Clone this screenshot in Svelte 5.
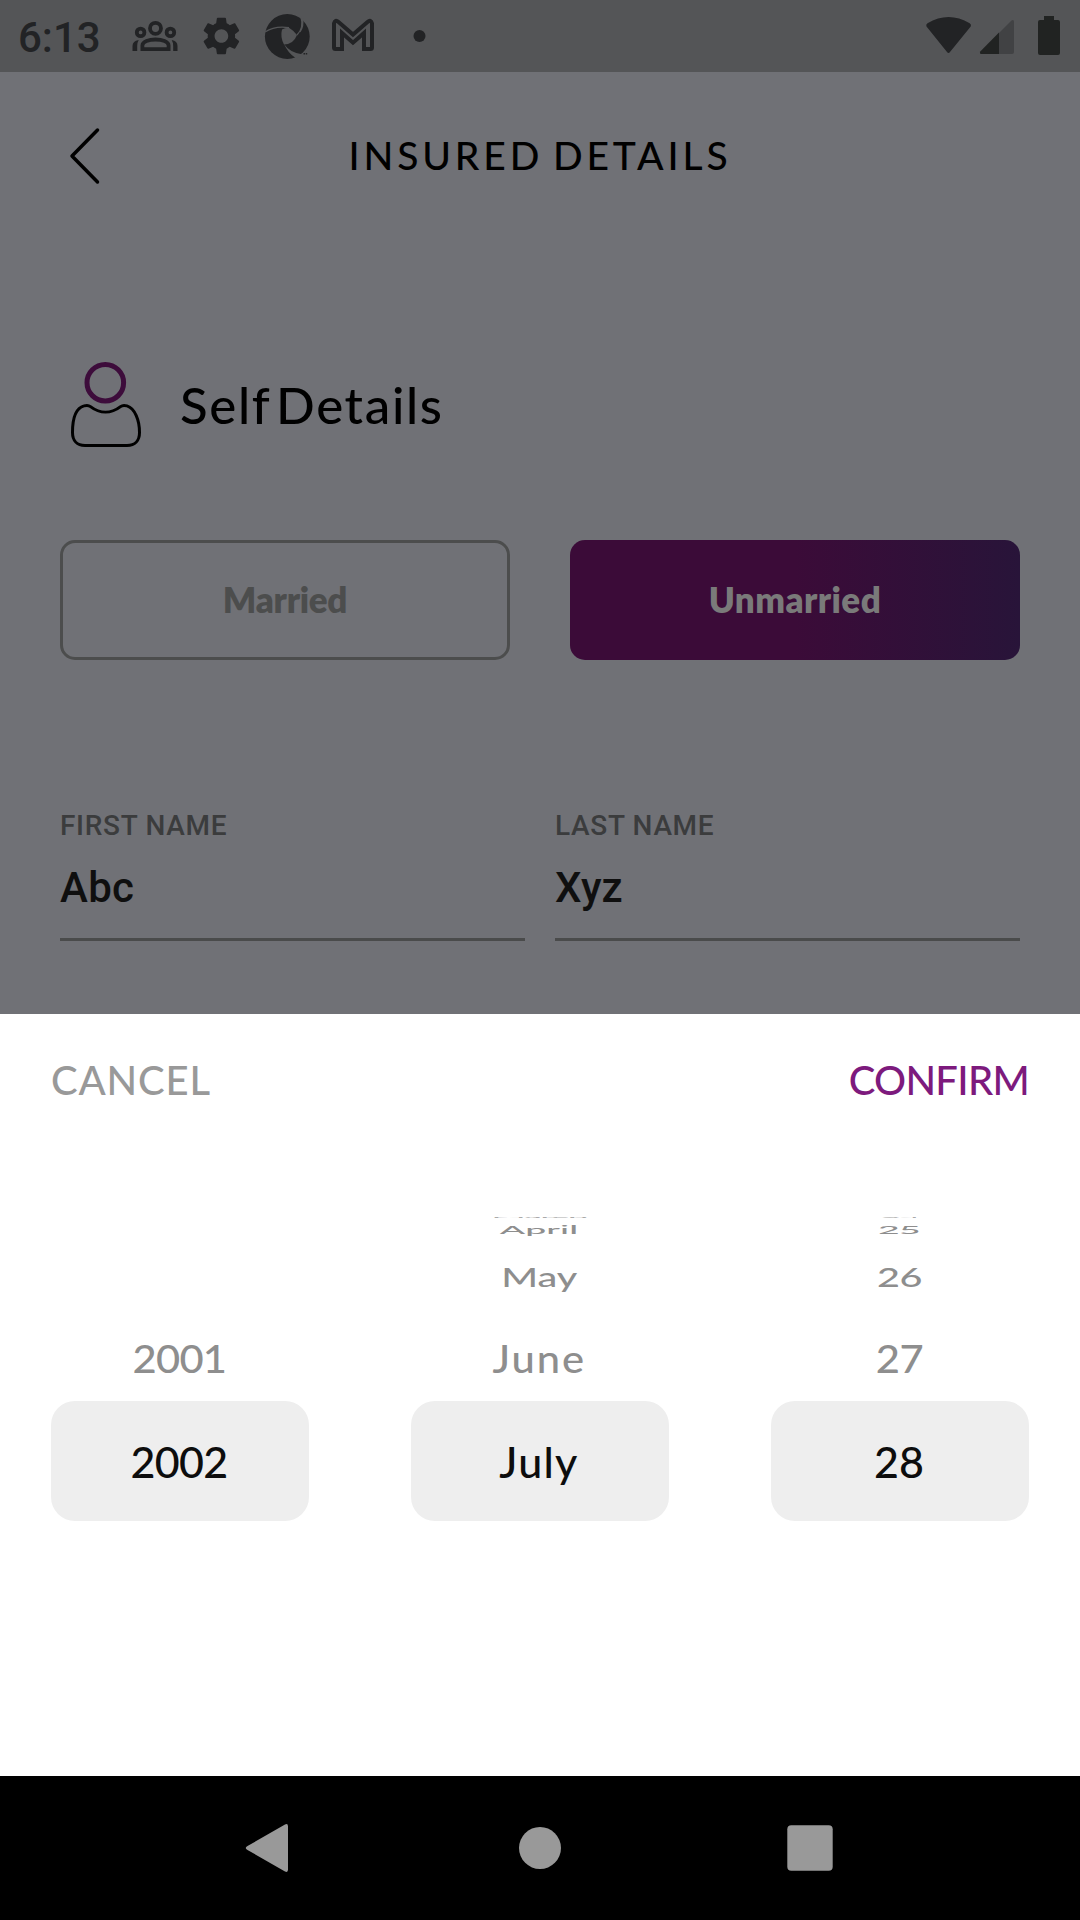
<script>
  const columns = [
    ['', '', '', '2001', '2002'],
    ['March', 'April', 'May', 'June', 'July'],
    ['24', '25', '26', '27', '28']
  ];
  const rowNames = ['r0', 'r1', 'r2', 'r3', 'selected'];
  const wheelWidths = {
    '2001': 97, '2002': 97, March: 113, April: 90, May: 83, June: 97, July: 79,
    '24': 47, '25': 48, '26': 49, '27': 49, '28': 50
  };

  // Tracks a label so that its advance width equals the given number of pixels.
  function fit(node, width) {
    if (!width) return;
    node.style.letterSpacing = '0px';
    const spacing = (width - node.offsetWidth) / node.textContent.length;
    node.style.letterSpacing = `${spacing}px`;
  }
</script>

<div class="screen">
  <header class="status">
    <span class="clock" use:fit={83}>6:13</span>
    <div class="notifications">
      <svg viewBox="-33 -36 66 72">
        <g fill="none" stroke="#222325" stroke-width="3.8">
          <circle cx="0.5" cy="-7.7" r="5.5" />
          <circle cx="-14.4" cy="-3.6" r="3.8" />
          <circle cx="15.4" cy="-3.6" r="3.8" />
          <path d="M-12.6 13.2V9.5C-12.6 1.5 13.6 1.5 13.6 9.5V13.2Z" />
        </g>
        <path fill="#222325" d="M-22.5 15V10q0-5 6.2-6-1.5 2.5-1.5 6V15ZM22.5 15V10q0-5-5.8-6 1.5 2.5 1.5 6V15Z" />
      </svg>
      <svg viewBox="-33 -36 66 72">
        <path fill="#222325" transform="translate(0.4 0) scale(1.9) translate(-12 -12)" d="M19.14 12.94c.04-.3.06-.61.06-.94 0-.32-.02-.64-.07-.94l2.03-1.58c.18-.14.23-.41.12-.61l-1.92-3.32c-.12-.22-.37-.29-.59-.22l-2.39.96c-.5-.38-1.03-.7-1.62-.94l-.36-2.54c-.04-.24-.24-.41-.48-.41h-3.84c-.24 0-.43.17-.47.41l-.36 2.54c-.59.24-1.13.57-1.62.94l-2.39-.96c-.22-.08-.47 0-.59.22L2.74 8.87c-.12.21-.08.47.12.61l2.03 1.58c-.05.3-.09.63-.09.94s.02.64.07.94l-2.03 1.58c-.18.14-.23.41-.12.61l1.92 3.32c.12.22.37.29.59.22l2.39-.96c.5.38 1.03.7 1.62.94l.36 2.54c.05.24.24.41.48.41h3.84c.24 0 .44-.17.47-.41l.36-2.54c.59-.24 1.13-.56 1.62-.94l2.39.96c.22.08.47 0 .59-.22l1.92-3.32c.12-.22.07-.47-.12-.61l-2.01-1.58zM12 15.6c-1.98 0-3.6-1.62-3.6-3.6s1.62-3.6 3.6-3.6 3.6 1.62 3.6 3.6-1.62 3.6-3.6 3.6z" />
      </svg>
      <svg viewBox="-33 -36 66 72">
        <circle cx="0.3" cy="0.5" r="22.4" fill="#222325" />
        <g fill="#545557">
          <path d="M-5-6.5Q-2-8.5 2-8.3 6-6 10-1 8 4 5 6 1 8.5-3 8.500-7 1-5-6.5Z" />
          <path d="M-3 8Q1 17 8 21.5L9 23 16 18.5Q3 17-3 8Z" />
        </g>
        <g fill="none" stroke="#545557" stroke-width="1.2">
          <path d="M-22-4Q-12-10.5 2-8.3M14-19Q17-8 10-1M15.5-17.5Q17-10 13-4" />
        </g>
        <path d="M16.5 17.8h4" stroke="#222325" stroke-width="1.5" stroke-dasharray="1.5 0.7" />
      </svg>
      <svg viewBox="-33 -36 66 72">
        <path fill="none" stroke="#222325" stroke-width="4" d="M-11 13V-3L0 6.7 11-3V13H17.5Q19 13 19 11.5V-12.5Q18-17 14.5-14L0-1.5-14.5-14Q-18-17-19-12.5V11.5Q-19 13-17.5 13Z" />
      </svg>
      <svg viewBox="-33 -36 66 72"><circle cx="0.5" cy="0" r="6" fill="#222325" /></svg>
    </div>
    <svg class="system" viewBox="910 0 170 72">
      <path fill="#222325" d="M926.5 26.5Q925.5 24.5 927.5 23.2 948.5 11 969.7 23.2 971.7 24.5 970.7 26.5L950 52Q948.5 54 947 52Z" />
      <path fill="#414244" d="M999 33 1011.5 20.5Q1014 18.8 1014 22V52Q1014 54 1012 54H999Z" />
      <path fill="#212322" d="M999 32.5V54H982Q978.8 54 980.5 51.2Z" />
      <path fill="#212322" d="M1044 16H1054V20H1058Q1060 20 1060 22V53Q1060 55 1058 55H1040Q1038 55 1038 53V22Q1038 20 1040 20H1044Z" />
    </svg>
  </header>

  <nav class="titlebar">
    <svg class="back" viewBox="0 0 34 60"><path d="M29.5 4 4 30 29.5 56" /></svg>
    <h1><span use:fit={383}>INSURED DETAILS</span></h1>
  </nav>

  <main>
    <section class="person">
      <svg viewBox="0 0 76 92">
        <circle cx="37.3" cy="22.7" r="18.3" />
        <path d="M22.5 46.6Q20 44.6 16 45.9C7 48.4 4.500 60.4 4.5 72.4C4.5 80.4 9 85.4 17 85.4H59C67 85.4 71.5 80.4 71.5 72.4C71.5 60.4 67 48.4 59 45.9Q55 44.6 52.5 46.6C43 53.900 32 53.9 22.5 46.6Z" />
      </svg>
      <h2><span use:fit={264}>Self Details</span></h2>
    </section>

    <div class="choices">
      <button class="outline"><span use:fit={124}>Married</span></button>
      <button class="filled"><span use:fit={172}>Unmarried</span></button>
    </div>

    <div class="fields">
      <label><small use:fit={167}>FIRST NAME</small><b use:fit={74}>Abc</b></label>
      <label><small use:fit={159}>LAST NAME</small><b use:fit={68}>Xyz</b></label>
    </div>
  </main>

  <section class="sheet">
    <div class="actions">
      <span class="cancel" use:fit={160}>CANCEL</span>
      <span class="confirm" use:fit={180}>CONFIRM</span>
    </div>
    <div class="wheels">
      {#each columns as column}
        <div class="wheel">
          {#each column as item, i}
            <div class="row {rowNames[i]}"><span use:fit={wheelWidths[item]}>{item}</span></div>
          {/each}
        </div>
      {/each}
    </div>
  </section>

  <footer>
    <svg viewBox="-30 -30 60 60"><path d="M15-23.5Q18-25 18-21.5V21.5Q18 25 15 23.5L-22.5 2Q-26 0-22.5-2Z" /></svg>
    <svg viewBox="-30 -30 60 60"><circle r="21" /></svg>
    <svg viewBox="-30 -30 60 60"><rect x="-22.7" y="-22.7" width="45.4" height="45.4" rx="4" /></svg>
  </footer>
</div>

<style>
  :global(body) { margin: 0; }
  .screen {
    width: 1080px;
    height: 1920px;
    display: flex;
    flex-direction: column;
    overflow: hidden;
    background: #707176;
    font-family: Lato, "Open Sans", sans-serif;
    color: #000;
  }
  span, small, b { white-space: nowrap; }
  svg { display: block; flex: none; }

  .status {
    height: 72px;
    flex: none;
    display: flex;
    align-items: center;
    background: #545557;
  }
  .clock {
    width: max-content;
    margin-left: 18px;
    font: 500 42px/72px Roboto, sans-serif;
    color: #222325;
    padding-top: 3px;
  }
  .notifications { display: flex; margin-left: 21px; }
  .notifications svg { width: 66px; height: 72px; }
  .system { width: 170px; height: 72px; margin-left: auto; }

  .titlebar {
    height: 168px;
    flex: none;
    display: grid;
    grid-template-columns: 120px 1fr 120px;
    align-items: center;
  }
  .back { width: 34px; height: 60px; margin-left: 68px; }
  .back path {
    fill: none;
    stroke: #000;
    stroke-width: 3.5;
    stroke-linecap: round;
    stroke-linejoin: round;
  }
  h1 {
    margin: 0;
    padding-bottom: 2px;
    text-align: center;
    font-size: 39px;
    line-height: 48px;
    font-weight: 500;
    word-spacing: -4px;
  }

  main { flex: 1; padding: 0 60px; }
  .person { display: flex; align-items: center; padding: 120px 0 0 8px; height: 92px; }
  .person svg { width: 76px; height: 92px; }
  .person circle { fill: none; stroke: #3d0c3b; stroke-width: 5; }
  .person path { fill: none; stroke: #000; stroke-width: 3; }
  h2 {
    margin: 0 0 0 36px;
    padding-bottom: 2px;
    font-size: 51px;
    line-height: 60px;
    font-weight: 500;
    word-spacing: -9px;
  }

  .choices { display: grid; grid-template-columns: 450px 450px; gap: 60px; margin-top: 88px; }
  button {
    height: 120px;
    border: 0;
    border-radius: 15px;
    padding: 0 0 2px;
    font: 800 35px/42px Lato, sans-serif;
  }
  .outline { border: 3px solid #4c4d4d; background: none; color: #4c4d4d; }
  .filled {
    background: linear-gradient(90deg, #3b0b38 50%, #281439);
    color: #7a7a7a;
  }

  .fields { display: grid; grid-template-columns: 1fr 1fr; gap: 30px; margin-top: 149px; }
  label {
    height: 129px;
    border-bottom: 3px solid #4a4b4b;
    display: flex;
    flex-direction: column;
    align-items: flex-start;
    font-family: Roboto, sans-serif;
  }
  small { font-size: 28px; line-height: 34px; font-weight: 500; color: #3b3c3d; }
  b { font-size: 42px; line-height: 50px; font-weight: 500; color: #0f0f0f; margin-top: 20px; }

  .sheet { height: 762px; flex: none; background: #fff; }
  .actions {
    display: flex;
    justify-content: space-between;
    padding: 42px 51px 0 51px;
    font-size: 40px;
    line-height: 48px;
    font-weight: 500;
  }
  .cancel { color: #999; }
  .confirm { color: #7d1a7d; }

  .wheels {
    display: grid;
    grid-template-columns: repeat(3, 258px);
    justify-content: space-between;
    padding: 0 51px;
    margin-top: 105px;
  }
  .row {
    box-sizing: border-box;
    display: flex;
    align-items: center;
    justify-content: center;
    padding-right: 2px;
    font-size: 43px;
    line-height: 52px;
    font-weight: 500;
    color: #8e8e8e;
  }
  .row span { flex: none; }
  .r0 { height: 15px; }
  .r0 span { transform: scale(0.85, 0.05); opacity: 0.75; }
  .r1 { height: 11px; }
  .r1 span { transform: scale(0.87, 0.28); }
  .r2 { height: 84px; }
  .r2 span { transform: scale(0.92, 0.64); }
  .r3 { height: 82px; padding-bottom: 2px; }
  .r3 span { transform: scale(0.97, 0.89); }
  .selected {
    height: 120px;
    padding-top: 2px;
    border-radius: 24px;
    background: #eee;
    color: #0d0d0d;
  }

  footer {
    height: 144px;
    flex: none;
    display: grid;
    grid-template-columns: repeat(3, 270px);
    place-content: center;
    place-items: center;
    background: #000;
  }
  footer svg { width: 60px; height: 60px; fill: #999; }
</style>
